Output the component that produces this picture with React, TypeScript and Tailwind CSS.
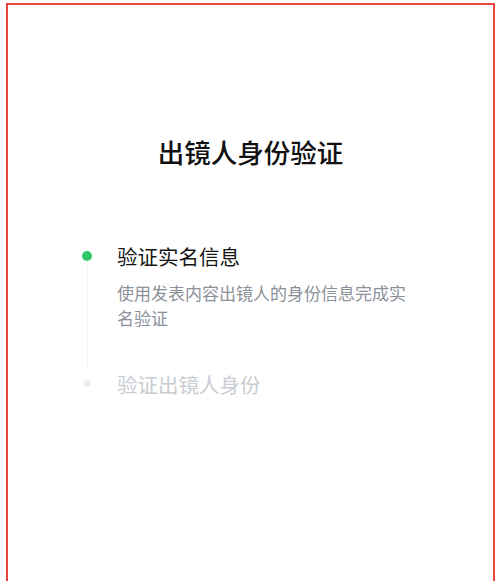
export default function App() {
  const font = { fontFamily: '"Noto Sans CJK SC", "Noto Sans", sans-serif' };
  return (
    <div className="w-[500px] h-[581px] overflow-hidden bg-white pt-[3px] pl-[6px] pr-[5px]" style={font}>
      <div className="h-[620px] border-2 border-[#e8463c] bg-white">
        <h1 className="pt-[129px] text-center text-[26.5px] leading-[36px] font-medium text-[#111111]">
          出镜人身份验证
        </h1>

        <div className="mt-[72px] pl-[74px]">
          {/* step 1 */}
          <div className="flex gap-x-[25px]">
            <div className="flex w-[10px] flex-col items-center">
              <div className="mt-[9px] h-[10px] w-[10px] rounded-full bg-[#2fc765]" />
              <div className="w-px flex-1 bg-[#f6f6f6]" />
            </div>
            <div className="pb-[40px]">
              <div className="text-[20.5px] leading-[28px] text-[#161616]">验证实名信息</div>
              <p className="mt-[10px] w-[295px] text-[17px] leading-[25px] text-[#8c9099]">
                使用发表内容出镜人的身份信息完成实名验证
              </p>
            </div>
          </div>

          {/* step 2 */}
          <div className="flex gap-x-[25px]">
            <div className="flex w-[10px] flex-col items-center">
              <div className="mt-[10px] h-[7px] w-[7px] rounded-full bg-[#ededed]" />
            </div>
            <div className="text-[20.5px] leading-[28px] text-[#c9ccd1]">验证出镜人身份</div>
          </div>
        </div>
      </div>
    </div>
  );
}
